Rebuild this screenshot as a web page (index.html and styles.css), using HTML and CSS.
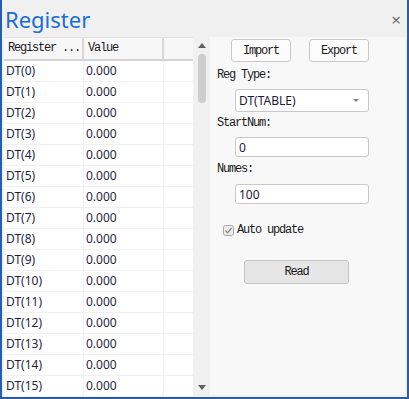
FILE: index.html
```html
<!DOCTYPE html>
<html lang="en">
<head>
    <meta charset="UTF-8">
    <title>Register</title>
    <link rel="stylesheet" href="styles.css">
</head>
<body>

<div class="window">
    <div class="titlebar">
        <span class="title">Register</span>
        <span class="close">&times;</span>
    </div>

    <div class="content">
        <div class="table">
            <div class="thead">
                <div class="cell c1 mono">Register ...</div>
                <div class="cell c2 mono">Value</div>
                <div class="cell c3"></div>
            </div>
            <div class="tbody" id="rows"></div>
        </div>

        <div class="scrollbar">
            <div class="arrow-up"></div>
            <div class="thumb"></div>
            <div class="track"></div>
            <div class="arrow-down"></div>
        </div>

        <div class="panel">
            <div class="button-row">
                <button class="btn mono">Import</button>
                <button class="btn mono">Export</button>
            </div>

            <div class="label mono label-first">Reg Type:</div>
            <div class="field combo">
                <span>DT(TABLE)</span>
                <span class="combo-arrow"></span>
            </div>

            <div class="label mono">StartNum:</div>
            <div class="field input-start">0</div>

            <div class="label mono">Numes:</div>
            <div class="field input-numes">100</div>

            <div class="check-row">
                <svg class="checkbox" width="11" height="11" viewBox="0 0 11 11">
                    <rect x="0.5" y="0.5" width="10" height="10" rx="2" fill="#ececec" stroke="#a8a8a8"/>
                    <path d="M2.5 5.5 L4.5 7.8 L8.6 3" fill="none" stroke="#8a8a8a" stroke-width="1.3"/>
                </svg>
                <span class="mono">Auto update</span>
            </div>

            <button class="btn read mono">Read</button>
        </div>
    </div>
</div>

<script>
    // Build the register rows
    const rows = document.getElementById("rows");
    for (let i = 0; i < 16; i++) {
        const row = document.createElement("div");
        row.className = "row";
        row.innerHTML = `<div class="cell c1">DT(${i})</div><div class="cell c2">0.000</div><div class="cell c3"></div>`;
        rows.appendChild(row);
    }
</script>

</body>
</html>
```

FILE: styles.css
```css
body {
    margin: 0;
    font-family: "Noto Sans", sans-serif;
    background-color: #fff;
}

.mono {
    font-family: "Liberation Mono", monospace;
    font-size: 12px;
    letter-spacing: -1.2px;
    color: #1a1a1a;
}

.window {
    width: 409px;
    height: 399px;
    box-sizing: border-box;
    border: 2px solid #2b5ca6;
    border-top: none;
    background-color: #f0f0f0;
    display: flex;
    flex-direction: column;
    overflow: hidden;
}

.titlebar {
    height: 37px;
    flex-shrink: 0;
    display: flex;
    justify-content: space-between;
    align-items: flex-start;
    padding: 4px 6px 0 3px;
    box-sizing: border-box;
}

.title {
    font-size: 22px;
    line-height: 30px;
    color: #1b6dd6;
}

.close {
    font-size: 17px;
    line-height: 20px;
    margin-top: 6px;
    color: #707070;
}

.content {
    flex: 1;
    display: flex;
    padding: 0 2px;
}

/* table */
.table {
    width: 189px;
    background-color: #fff;
}

.thead {
    display: flex;
    height: 24px;
    box-sizing: border-box;
    background-color: #f7f7f7;
    border-top: 1px solid #e4e4e4;
    border-bottom: 2px solid #d4d4d4;
}

.thead .cell {
    line-height: 21px;
    padding-left: 4px;
    border-right: 2px solid #d8d8d8;
}

.cell {
    box-sizing: border-box;
    white-space: nowrap;
    overflow: hidden;
}

.c1 {
    width: 80px;
}

.c2 {
    width: 80px;
}

.c3 {
    flex: 1;
    border-right: none !important;
}

.row {
    display: flex;
    height: 21px;
    box-sizing: border-box;
    border-bottom: 1px solid #f0f0f0;
}

.row .cell {
    font-size: 12px;
    line-height: 20px;
    padding-left: 2px;
    color: #1f1f3a;
    border-right: 1px solid #f0f0f0;
}

/* scrollbar */
.scrollbar {
    width: 16px;
    display: flex;
    flex-direction: column;
    align-items: center;
    padding: 6px 0 7px 1px;
    box-sizing: border-box;
}

.arrow-up {
    width: 0;
    height: 0;
    border-left: 4px solid transparent;
    border-right: 4px solid transparent;
    border-bottom: 5px solid #606060;
}

.arrow-down {
    width: 0;
    height: 0;
    border-left: 4px solid transparent;
    border-right: 4px solid transparent;
    border-top: 5px solid #606060;
}

.thumb {
    width: 8px;
    height: 49px;
    margin-top: 6px;
    border-radius: 4px;
    background-color: #cdcdcd;
}

.track {
    flex: 1;
}

/* right panel */
.panel {
    width: 195px;
    height: 358px;
    margin-left: 1px;
    background-color: #f8f8f8;
    padding: 2px 0 0 7px;
    box-sizing: border-box;
}

.button-row {
    display: flex;
    gap: 18px;
    margin-left: 14px;
}

.btn {
    width: 60px;
    height: 23px;
    padding: 0;
    border: 1px solid #c9c9c9;
    border-radius: 3px;
    background-color: #fcfcfc;
    text-align: center;
}

.label {
    line-height: 14px;
}

.label-first {
    margin-top: 6px;
}

.field {
    width: 134px;
    box-sizing: border-box;
    margin-left: 18px;
    padding-left: 3px;
    border: 1px solid #c8c8c8;
    border-radius: 3px;
    background-color: #fff;
    font-size: 12px;
    color: #1a1a3a;
    display: flex;
    align-items: center;
}

.combo {
    height: 23px;
    margin-top: 7px;
    margin-bottom: 4px;
    justify-content: space-between;
    padding-right: 9px;
}

.combo-arrow {
    width: 0;
    height: 0;
    border-left: 3px solid transparent;
    border-right: 3px solid transparent;
    border-top: 3px solid #808080;
}

.input-start {
    height: 20px;
    margin-top: 7px;
    margin-bottom: 5px;
}

.input-numes {
    height: 20px;
    margin-top: 8px;
}

.check-row {
    display: flex;
    align-items: center;
    gap: 3px;
    margin: 19px 0 0 6px;
    height: 14px;
}

.read {
    display: block;
    width: 105px;
    height: 24px;
    margin: 23px 0 0 27px;
    background-color: #e6e6e6;
    border-color: #c4c4c4;
}
```
